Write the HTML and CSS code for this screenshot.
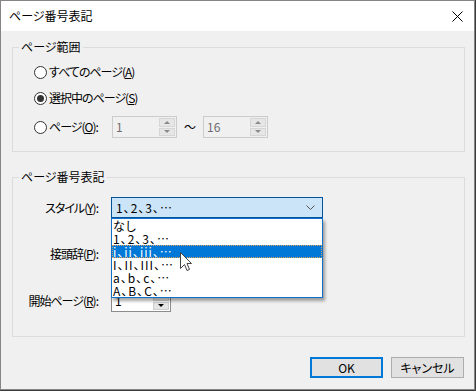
FILE: index.html
```html
<!DOCTYPE html>
<html lang="ja">
<head>
    <meta charset="utf-8">
    <title>ページ番号表記</title>
    <link rel="stylesheet" href="styles.css">
</head>
<body>
    <div class="window">
        <div class="titlebar">
            <span class="title">ページ番号表記</span>
            <span class="close">
                <svg width="11" height="11" viewBox="0 0 11 11"><path d="M0.5 0.5L10.5 10.5M10.5 0.5L0.5 10.5" stroke="#000" stroke-width="1" fill="none"/></svg>
            </span>
        </div>

        <div class="client">
            <fieldset class="group range">
                <legend>ページ範囲</legend>
                <div class="row"><span class="radio"></span><span>すべてのページ(<u>A</u>)</span></div>
                <div class="row"><span class="radio checked"></span><span>選択中のページ(<u>S</u>)</span></div>
                <div class="row pages">
                    <div class="radio-label"><span class="radio"></span><span>ページ(<u>O</u>):</span></div>
                    <div class="spin disabled">
                        <span class="spin-value">1</span>
                        <span class="spin-buttons"><span class="up"></span><span class="down"></span></span>
                    </div>
                    <span class="tilde">～</span>
                    <div class="spin disabled">
                        <span class="spin-value">16</span>
                        <span class="spin-buttons"><span class="up"></span><span class="down"></span></span>
                    </div>
                </div>
            </fieldset>

            <fieldset class="group numbering">
                <legend>ページ番号表記</legend>
                <div class="field style">
                    <span class="field-label">スタイル(<u>Y</u>):</span>
                    <div class="combo">
                        <span class="combo-value">1、2、3、…</span>
                        <svg width="9" height="5" viewBox="0 0 9 5"><path d="M0.5 0.5L4.5 4.5L8.5 0.5" stroke="#555" fill="none"/></svg>
                        <ul class="dropdown">
                            <li>なし</li>
                            <li>1、2、3、…</li>
                            <li class="selected">i、ii、iii、…</li>
                            <li>I、II、III、…</li>
                            <li>a、b、c、…</li>
                            <li>A、B、C、…</li>
                        </ul>
                    </div>
                </div>
                <div class="field">
                    <span class="field-label">接頭辞(<u>P</u>):</span>
                    <div class="textbox"></div>
                </div>
                <div class="field">
                    <span class="field-label">開始ページ(<u>R</u>):</span>
                    <div class="spin start">
                        <span class="spin-value">1</span>
                        <span class="spin-buttons"><span class="up"></span><span class="down"></span></span>
                    </div>
                </div>
            </fieldset>

            <div class="buttons">
                <button class="btn default">OK</button>
                <button class="btn">キャンセル</button>
            </div>
        </div>

        <svg class="cursor" width="13" height="20" viewBox="0 0 13 20">
            <path d="M0.5 0.5V16.5L4.5 12.5L7 18.5L9.5 17.5L7 11.5H11.5Z" fill="#fff" stroke="#444" stroke-width="1" stroke-linejoin="miter"/>
        </svg>
    </div>
</body>
</html>
```

FILE: styles.css
```css
body {
    margin: 0;
    background: #3a3a3a;
    font-family: "Noto Sans CJK JP", sans-serif;
    font-size: 12px;
    font-feature-settings: "palt";
    color: #000;
}
.window {
    position: relative;
    width: 475px;
    height: 390px;
    box-sizing: border-box;
    border: 1px solid #858585;
    background: #f0f0f0;
}
.titlebar {
    height: 30px;
    background: #fff;
    display: flex;
    align-items: center;
    justify-content: space-between;
}
.title {
    padding-left: 8px;
    line-height: 14px;
}
.close {
    width: 46px;
    height: 30px;
    display: flex;
    align-items: center;
    justify-content: center;
    margin-right: -6px;
}
.client {
    padding: 9px 10px 0 0;
}
.group {
    margin: 0 -1px 0 11px;
    border: 1px solid #dcdcdc;
    min-width: 0;
}
.group legend {
    margin-left: 6px;
    padding: 0 2px;
    line-height: 14px;
}
.range {
    padding: 6px 0 13px 0;
}
.numbering {
    margin-top: 18px;
    padding: 13px 0 24px 0;
}
.row {
    display: flex;
    align-items: center;
    height: 24px;
    margin-left: 21px;
    line-height: 14px;
    letter-spacing: -1px;
}
.row + .row {
    margin-top: 2px;
}
.row.pages {
    height: 22px;
    margin-top: 6px;
}
.radio {
    position: relative;
    flex: none;
    width: 13px;
    height: 13px;
    box-sizing: border-box;
    border: 1px solid #333;
    border-radius: 50%;
    background: #fff;
    margin-right: 2px;
}
.radio.checked::after {
    content: "";
    position: absolute;
    left: 2px;
    top: 2px;
    width: 7px;
    height: 7px;
    border-radius: 50%;
    background: #333;
}
.radio-label {
    display: flex;
    align-items: center;
    width: 78px;
}
.spin {
    display: flex;
    width: 65px;
    height: 22px;
    box-sizing: border-box;
    border: 1px solid #ccc;
    background: #f0f0f0;
    padding: 1px;
    letter-spacing: 0;
}
.spin-value {
    flex: 1;
    padding-left: 2px;
    line-height: 18px;
    color: #6d6d6d;
}
.spin-buttons {
    display: flex;
    flex-direction: column;
    gap: 1px;
    width: 16px;
}
.spin-buttons span {
    flex: 1;
    display: flex;
    align-items: center;
    justify-content: center;
    background: #e6e6e6;
    border: 1px solid #d6d6d6;
}
.spin-buttons .up::after {
    content: "";
    border-left: 3px solid transparent;
    border-right: 3px solid transparent;
    border-bottom: 3px solid #8a8a8a;
}
.spin-buttons .down::after {
    content: "";
    border-left: 3px solid transparent;
    border-right: 3px solid transparent;
    border-top: 3px solid #8a8a8a;
}
.spin.start {
    width: 60px;
    border-color: #8c8c8c;
    background: #fff;
}
.spin.start .spin-value {
    color: #000;
}
.spin.start .spin-buttons span {
    background: #e5e5e5;
    border-color: #cfcfcf;
}
.spin.start .down::after {
    border-top-color: #000;
}
.spin.start .up::after {
    border-bottom-color: #000;
}
.tilde {
    width: 26px;
    text-align: center;
    letter-spacing: 0;
}
.field {
    display: flex;
    align-items: center;
    height: 22px;
    line-height: 14px;
}
.field.style {
    height: 21px;
}
.field + .field {
    margin-top: 25px;
}
.field-label {
    flex: none;
    width: 85px;
    margin-right: 13px;
    text-align: right;
    letter-spacing: -1px;
}
.combo {
    position: relative;
    display: flex;
    align-items: center;
    justify-content: space-between;
    width: 212px;
    height: 21px;
    box-sizing: border-box;
    border: 1px solid #005499;
    background: #cce4f7;
    padding: 0 7px 0 4px;
}
.combo-value,
.dropdown li {
    letter-spacing: 1px;
}
.textbox {
    width: 212px;
    height: 22px;
    box-sizing: border-box;
    border: 1px solid #8c8c8c;
    background: #fff;
}
.dropdown {
    position: absolute;
    left: -1px;
    top: calc(100% + 1px);
    z-index: 2;
    width: 212px;
    box-sizing: border-box;
    margin: 0;
    padding: 0;
    list-style: none;
    border: 1px solid #1370c8;
    background: #fff;
    box-shadow: 2px 3px 3px rgba(0, 0, 0, 0.35);
}
.dropdown li {
    height: 13px;
    line-height: 13px;
    padding-left: 1px;
    white-space: nowrap;
}
.dropdown li.selected {
    background: #0078d7;
    color: #fff;
    outline: 1px dotted #e0a060;
    outline-offset: -1px;
}
.buttons {
    display: flex;
    justify-content: flex-end;
    gap: 8px;
    margin-top: 20px;
}
.btn {
    width: 73px;
    height: 21px;
    box-sizing: border-box;
    padding: 0;
    border: 1px solid #adadad;
    background: #e1e1e1;
    font: inherit;
    line-height: 17px;
    color: #000;
}
.btn.default {
    border: 2px solid #0078d7;
}
.cursor {
    position: absolute;
    left: 179px;
    top: 251px;
    z-index: 3;
}
```
